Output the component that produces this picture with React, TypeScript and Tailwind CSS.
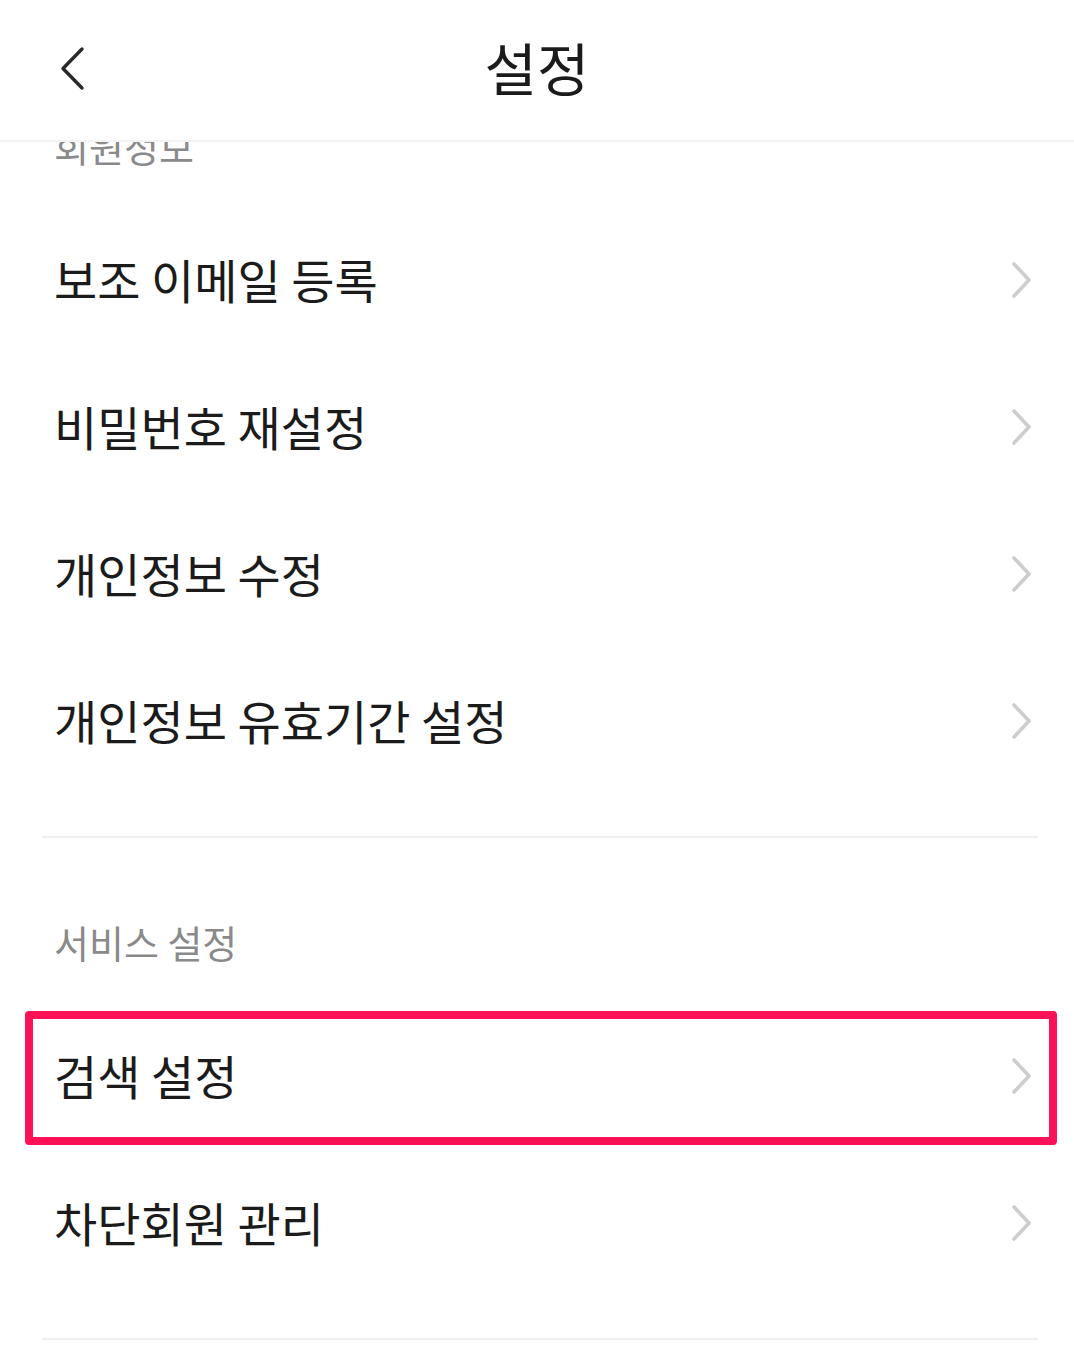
import { ReactNode } from "react";

type Section = {
  label: string;
  items: string[];
};

const SECTIONS: Section[] = [
  {
    label: "회원정보",
    items: ["보조 이메일 등록", "비밀번호 재설정", "개인정보 수정", "개인정보 유효기간 설정"],
  },
  {
    label: "서비스 설정",
    items: ["검색 설정", "차단회원 관리"],
  },
];

const HIGHLIGHT = "검색 설정";

function BackIcon() {
  return (
    <svg width="30" height="48" viewBox="0 0 30 48" fill="none">
      <path
        d="M24 3 L5 22.5 L24 42"
        stroke="#2a2a2a"
        strokeWidth="3.4"
        strokeLinecap="round"
        strokeLinejoin="round"
      />
    </svg>
  );
}

function ChevronRight() {
  return (
    <svg width="22" height="38" viewBox="0 0 22 38" fill="none">
      <path
        d="M3 3 L18 19 L3 35"
        stroke="#cdcdcd"
        strokeWidth="3.6"
        strokeLinecap="round"
        strokeLinejoin="round"
      />
    </svg>
  );
}

function Row({ title, children }: { title: string; children?: ReactNode }) {
  return (
    <button
      type="button"
      className="relative flex h-[147px] w-full items-center justify-between pr-[41px] pl-[54px] text-left"
    >
      <span className="pb-[2px] text-[47px] leading-none text-[#1b1b1b]">{title}</span>
      <ChevronRight />
      {children}
    </button>
  );
}

export default function App() {
  return (
    <div
      className="h-[1362px] w-[1074px] overflow-hidden bg-white"
      style={{ fontFamily: '"Noto Sans CJK KR", "Noto Sans", sans-serif' }}
    >
      <header className="relative z-10 flex h-[142px] items-center border-b-2 border-[#f3f3f3] bg-white">
        <div className="flex w-[140px] items-center pl-[58px]">
          <BackIcon />
        </div>
        <h1 className="flex-1 pr-[140px] pb-[8px] text-center text-[57px] leading-none font-normal text-[#1b1b1b]">
          설정
        </h1>
      </header>

      <main className="-mt-[100px]">
        {SECTIONS.map((section) => (
          <section key={section.label}>
            <p className="pt-[86px] pb-[42px] pl-[54px] text-[38px] leading-[36px] text-[#8a8a8a]">
              {section.label}
            </p>
            {section.items.map((item) => (
              <Row key={item} title={item}>
                {item === HIGHLIGHT && (
                  <span className="pointer-events-none absolute top-[9px] right-[17px] bottom-[4px] left-[25px] rounded-[4px] border-[8px] border-[#ff1158]" />
                )}
              </Row>
            ))}
            <div className="mt-[42px] pr-[36px] pl-[42px]">
              <div className="h-[2px] bg-[#f0f0f0]" />
            </div>
          </section>
        ))}
      </main>
    </div>
  );
}
